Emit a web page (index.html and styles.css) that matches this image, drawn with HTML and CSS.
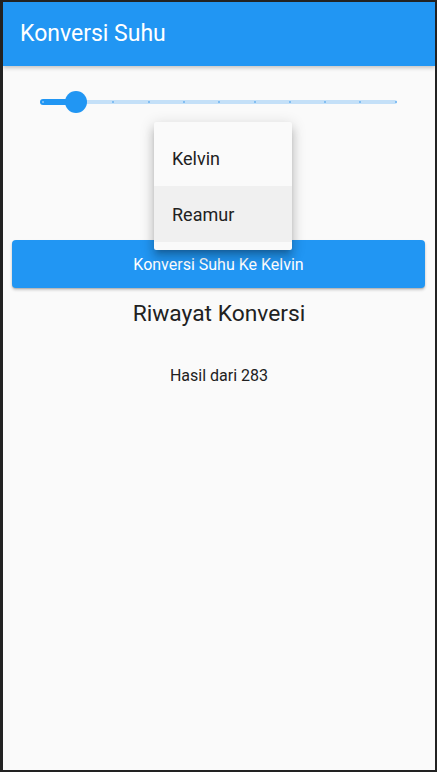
FILE: index.html
```html
<!DOCTYPE html>
<html>
<head>
<meta charset="utf-8">
<link rel="stylesheet" href="styles.css">
</head>
<body>
<div class="screen">
  <header class="appbar"><h1 class="title">Konversi Suhu</h1></header>
  <main class="content">
    <div class="slider">
      <div class="track">
        <div class="track-active"></div>
        <div class="track-inactive"></div>
        <span class="tick tick-on" style="left:1.7px"></span>
        <span class="tick" style="left:37px"></span>
        <span class="tick" style="left:72.3px"></span>
        <span class="tick" style="left:107.6px"></span>
        <span class="tick" style="left:142.9px"></span>
        <span class="tick" style="left:178.2px"></span>
        <span class="tick" style="left:213.5px"></span>
        <span class="tick" style="left:248.8px"></span>
        <span class="tick" style="left:284.1px"></span>
        <span class="tick" style="left:319.4px"></span>
        <span class="tick" style="left:354.7px"></span>
        <span class="thumb"></span>
      </div>
    </div>
    <div class="dropdown-slot"></div>
    <button class="btn">Konversi Suhu Ke Kelvin</button>
    <h2 class="heading">Riwayat Konversi</h2>
    <p class="result">Hasil dari 283</p>
  </main>
  <div class="menu">
    <div class="menu-item">Kelvin</div>
    <div class="menu-item menu-item-active">Reamur</div>
  </div>
</div>
</body>
</html>
```

FILE: styles.css
```css
html, body {
  margin: 0;
  padding: 0;
  background: #222222;
}
body {
  padding: 2px 2px 2px 3px;
  font-family: Roboto, "Noto Sans", sans-serif;
}
.screen {
  position: relative;
  width: 432px;
  height: 768px;
  background: #fafafa;
  overflow: hidden;
  display: flex;
  flex-direction: column;
}
.appbar {
  height: 64px;
  flex: none;
  background: #2196f3;
  display: flex;
  align-items: center;
  padding-left: 17px;
  box-shadow: 0 2px 4px rgba(0,0,0,0.22);
  position: relative;
  z-index: 1;
}
.title {
  margin: 0;
  color: #ffffff;
  font-size: 23px;
  font-weight: 400;
  line-height: 30px;
}
.content {
  display: flex;
  flex-direction: column;
  align-items: stretch;
}
.slider {
  height: 48px;
  margin-top: 12px;
  display: flex;
  align-items: center;
  padding-left: 37px;
}
.track {
  position: relative;
  width: 357px;
  height: 6px;
  display: flex;
  align-items: center;
}
.track-active {
  width: 38px;
  height: 6px;
  background: #2196f3;
  border-radius: 3px 0 0 3px;
}
.track-inactive {
  flex: 1;
  height: 4px;
  background: #c4e0f8;
  border-radius: 0 2px 2px 0;
}
.tick {
  position: absolute;
  top: 2px;
  width: 2px;
  height: 2px;
  border-radius: 1px;
  background: #6cb3f0;
}
.tick-on {
  background: #8ec7f7;
}
.thumb {
  position: absolute;
  left: 25px;
  top: -8px;
  width: 22px;
  height: 22px;
  border-radius: 50%;
  background: #2196f3;
}
.dropdown-slot {
  height: 114px;
}
.btn {
  margin: 0 10px 0 9px;
  height: 48px;
  border: none;
  border-radius: 4px;
  background: #2196f3;
  color: #ffffff;
  font-family: Roboto, "Noto Sans", sans-serif;
  font-size: 16px;
  font-weight: 400;
  box-shadow: 0 2px 3px rgba(0,0,0,0.2), 0 1px 1px rgba(0,0,0,0.12);
  padding: 0;
}
.heading {
  margin: 11px 0 0;
  text-align: center;
  font-size: 22.8px;
  line-height: 30px;
  font-weight: 400;
  color: #212121;
}
.result {
  margin: 35px 0 0;
  text-align: center;
  font-size: 16px;
  line-height: 24px;
  color: #212121;
}
.menu {
  position: absolute;
  left: 151px;
  top: 120px;
  width: 138px;
  padding: 8px 0;
  background: #fafafa;
  border-radius: 2px;
  box-shadow: 0 5px 5px -3px rgba(0,0,0,0.2), 0 8px 10px 1px rgba(0,0,0,0.14), 0 3px 14px 2px rgba(0,0,0,0.12);
  z-index: 2;
}
.menu-item {
  height: 56px;
  display: flex;
  align-items: center;
  padding-left: 18px;
  font-size: 18px;
  color: #212121;
}
.menu-item-active {
  background: #f0f0f0;
}
```
